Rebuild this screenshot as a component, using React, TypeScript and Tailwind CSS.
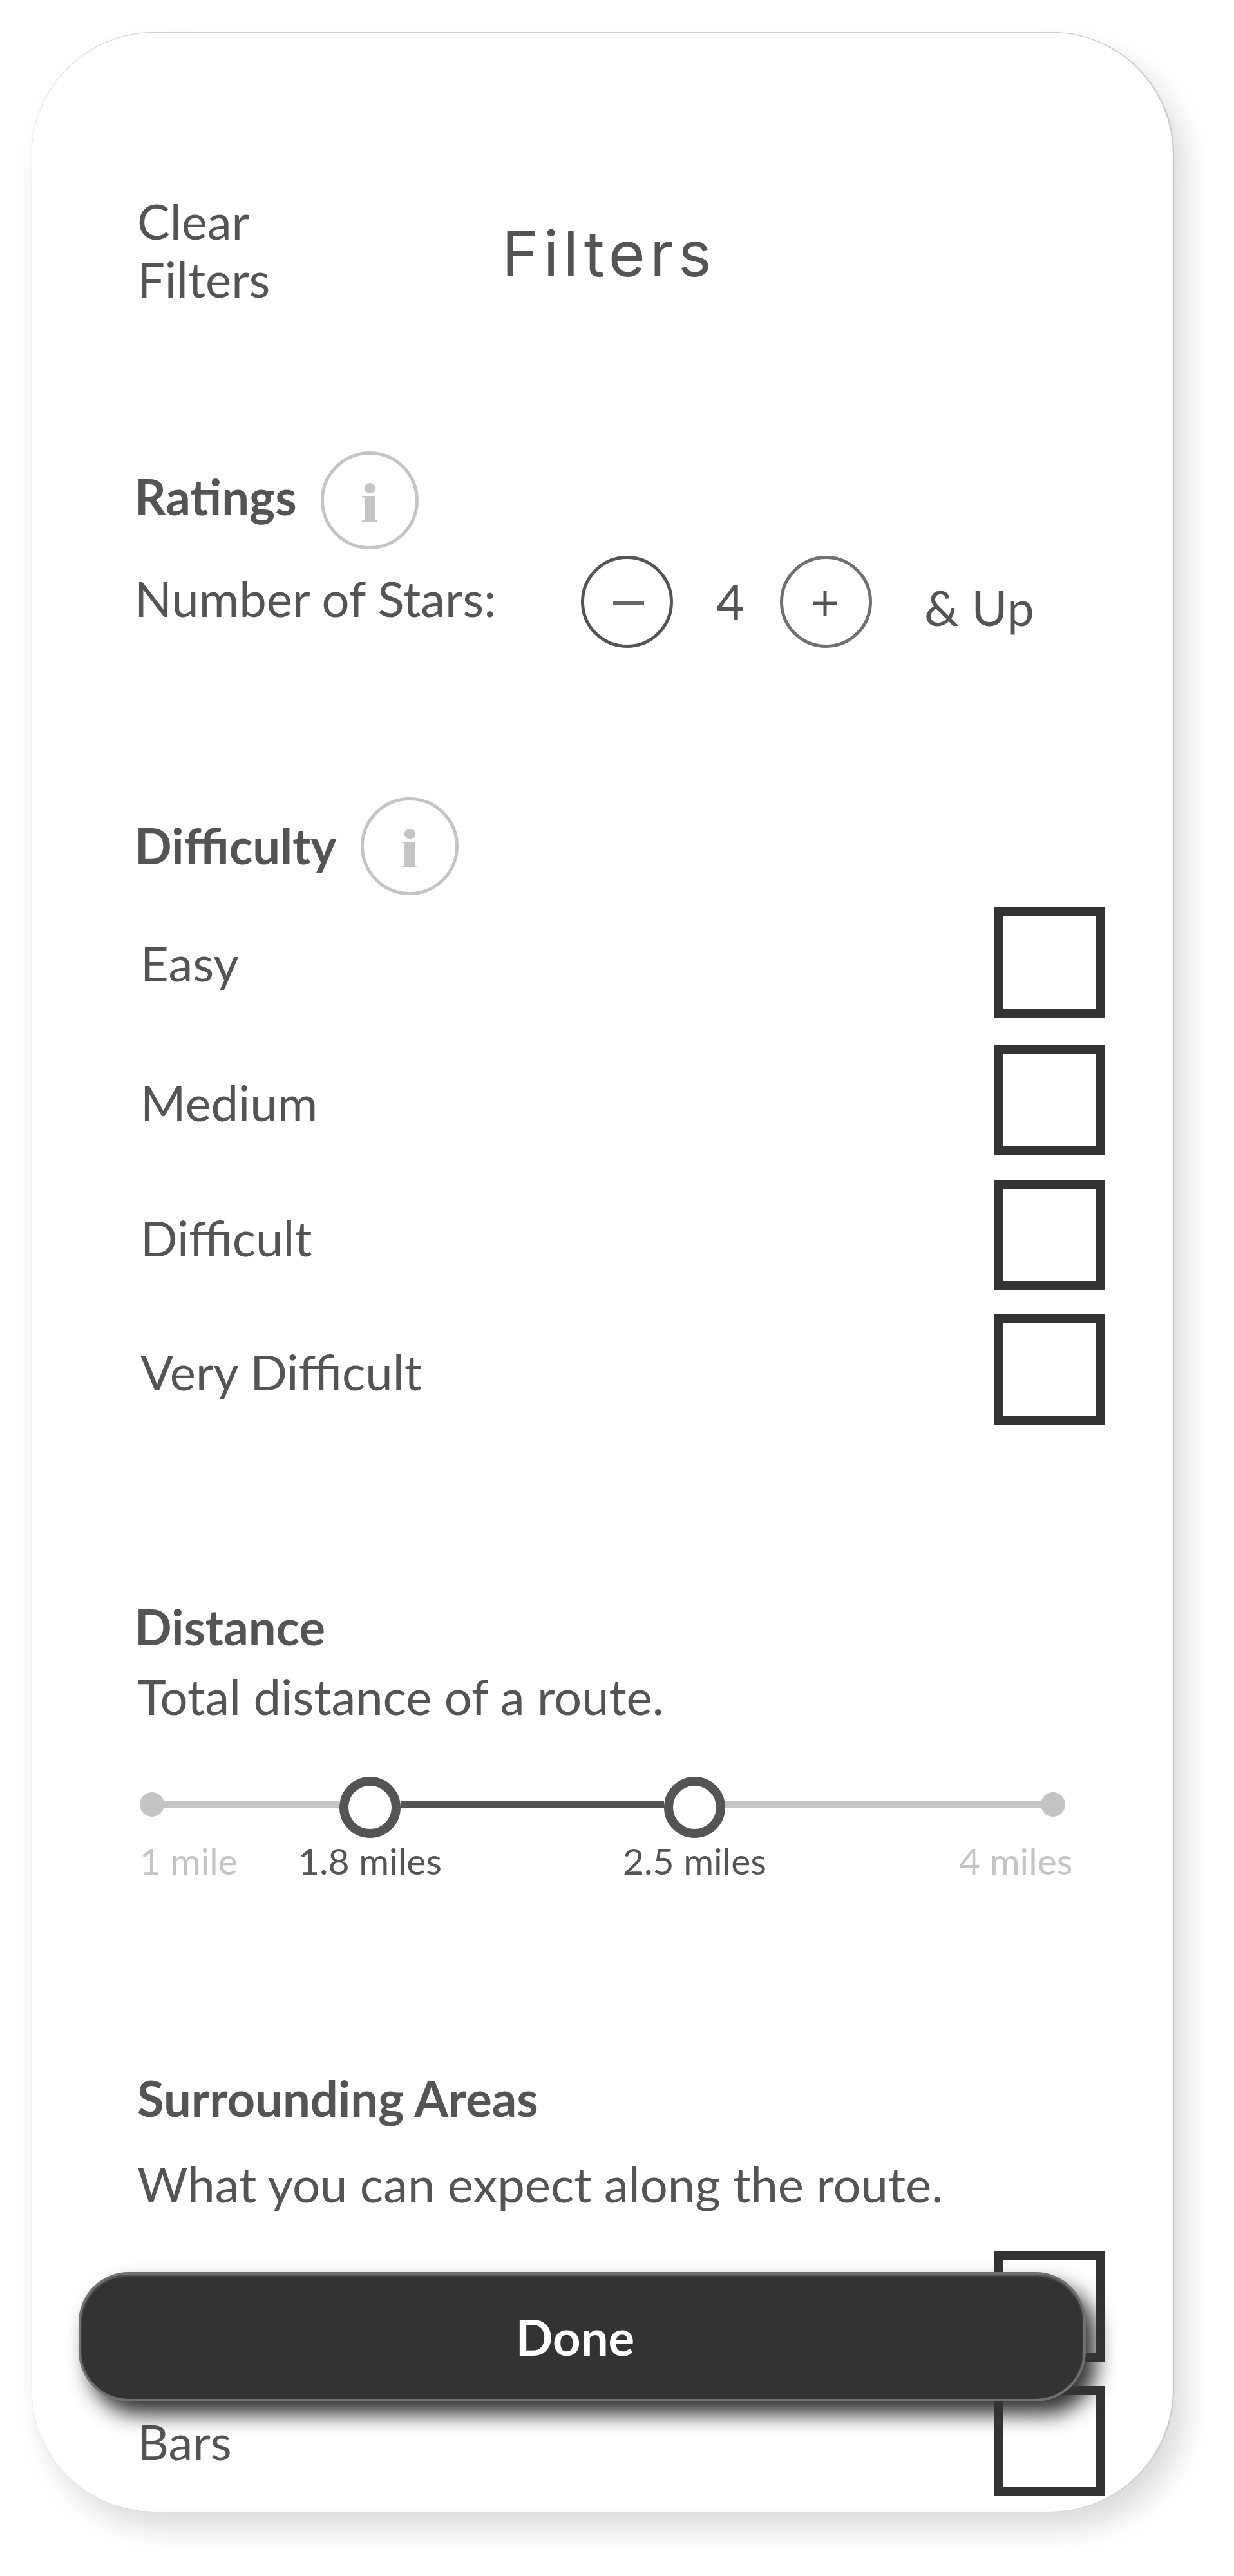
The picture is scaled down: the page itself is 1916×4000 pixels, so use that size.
const body = "font-['Lato','Open_Sans',sans-serif] text-[#545454] text-[76px] leading-[90px]";

function InfoIcon() {
  return (
    <span className="flex size-[152px] shrink-0 items-center justify-center rounded-full border-[5px] border-[#c4c4c4] text-[#c4c4c4]">
      <svg viewBox="0 0 24 60" className="mt-[6px] h-[60px] w-[24px]" fill="currentColor">
        <ellipse cx="12.5" cy="8" rx="8.6" ry="8" />
        <path d="M0 20H21V57.500Q22 58.300 24 58.300V60H0V58.300Q3 58.300 4 57.500V23Q3 21.800 0 21.800Z" />
      </svg>
    </span>
  );
}

function Heading({ children, className = "" }: { children: string; className?: string }) {
  return <h2 className={`leading-[90px] font-bold whitespace-nowrap ${className}`}>{children}</h2>;
}

function OptionRow({ label, className = "", labelClass = "pl-[9px]" }: { label: string; className?: string; labelClass?: string }) {
  return (
    <div className={`flex h-[171px] items-center justify-between ${className}`}>
      <span className={`whitespace-nowrap ${labelClass}`}>{label}</span>
      <span className="size-[171px] shrink-0 border-[14px] border-[#333333]" />
    </div>
  );
}

function Knob() {
  return <span className="mt-[9px] size-[95px] shrink-0 rounded-full border-[14px] border-[#545454]" />;
}

export default function App() {
  return (
    <div className="h-[4000px] w-[1916px] overflow-hidden bg-white pt-[50px] pl-[49px]">
      <main className={`${body} relative h-[3850px] w-[1774px] rounded-[190px] bg-white pl-[160px] shadow-[18px_26px_44px_rgba(0,0,0,0.14),0_0_1px_rgba(0,0,0,0.2),inset_-2px_0_1px_#c4c4c4,inset_0_1px_0_#d0d0d0]`}>
        <header className="flex h-[600px] pt-[248px]">
          <button className="h-[180px] w-[570px] pl-[4px] text-left">
            Clear
            <br />
            Filters
          </button>
          <h1 className="pt-[41px] font-['Inter',sans-serif] text-[98px] leading-[110px] tracking-[7px]">Filters</h1>
        </header>

        <section className="h-[588px] pt-[51px]">
          <div className="flex h-[152px] items-center gap-[37px]">
            <Heading className="-mt-[12px]">Ratings</Heading>
            <InfoIcon />
          </div>
          <div className="flex h-[162px] items-center">
            <span className="-mt-[11px] w-[693px] whitespace-nowrap">Number of Stars:</span>
            <button className="flex size-[143px] shrink-0 items-center justify-center rounded-full border-[5px] border-[#545454] pt-[5px] pl-[4px]">
              <span className="h-[6px] w-[48px] bg-[#666666]" />
            </button>
            <span className="-mt-[3px] w-[166px] shrink-0 pl-[12px] text-center">4</span>
            <button className="flex size-[143px] shrink-0 items-center justify-center rounded-full border-[5px] border-[#707070] pt-[5px] pr-[3px]">
              <svg viewBox="0 0 36 40" className="h-[40px] w-[36px]" stroke="#545454" strokeWidth="5">
                <path d="M0 20H36M18 0V40" />
              </svg>
            </button>
            <span className="mt-[17px] ml-[81px] whitespace-nowrap">&amp; Up</span>
          </div>
        </section>

        <section className="h-[1243px] pr-[108px]">
          <div className="flex h-[152px] items-center gap-[38px]">
            <Heading className="-mt-[2px]">Difficulty</Heading>
            <InfoIcon />
          </div>
          <div className="mt-[19px] flex flex-col">
            <OptionRow label="Easy" />
            <OptionRow label="Medium" className="mt-[42px]" labelClass="pt-[8px] pl-[9px]" />
            <OptionRow label="Difficult" className="mt-[39px]" labelClass="pt-[9px] pl-[9px]" />
            <OptionRow label="Very Difficult" className="mt-[38px]" labelClass="pt-[7px] pl-[9px]" />
          </div>
        </section>

        <section className="h-[732px]">
          <Heading>Distance</Heading>
          <p className="mt-[18px] pl-[4px] whitespace-nowrap">Total distance of a route.</p>
          <div className="mt-[75px] ml-[8px] flex h-[95px] items-center">
            <span className="size-[38px] rounded-full bg-[#c4c4c4]" />
            <span className="h-[10px] w-[272px] bg-[#c4c4c4]" />
            <Knob />
            <span className="h-[10px] w-[409px] bg-[#545454]" />
            <Knob />
            <span className="h-[10px] w-[490px] bg-[#c4c4c4]" />
            <span className="size-[38px] rounded-full bg-[#c4c4c4]" />
          </div>
          <div className="mt-[5px] flex pl-[8px] text-[57px] leading-[70px] whitespace-nowrap">
            <span className="w-[246px] text-[#c4c4c4]">1 mile</span>
            <span className="w-[504px]">1.8 miles</span>
            <span className="w-[522px]">2.5 miles</span>
            <span className="text-[#c4c4c4]">4 miles</span>
          </div>
        </section>

        <section className="pr-[108px]">
          <div className="pl-[4px]">
            <Heading>Surrounding Areas</Heading>
            <p className="mt-[43px] whitespace-nowrap">What you can expect along the route.</p>
          </div>
          <div className="mt-[60px] flex flex-col gap-[38px]">
            <OptionRow label="" />
            <OptionRow label="Bars" labelClass="pl-[4px]" />
          </div>
        </section>

        <button className="absolute top-[3478px] left-[73px] h-[201px] w-[1564px] rounded-[78px] border-4 border-[#707070] bg-[#333333] pr-[22px] text-center font-bold text-white shadow-[16px_20px_32px_#333333,inset_0_2px_3px_#606060]">
          Done
        </button>
      </main>
    </div>
  );
}
